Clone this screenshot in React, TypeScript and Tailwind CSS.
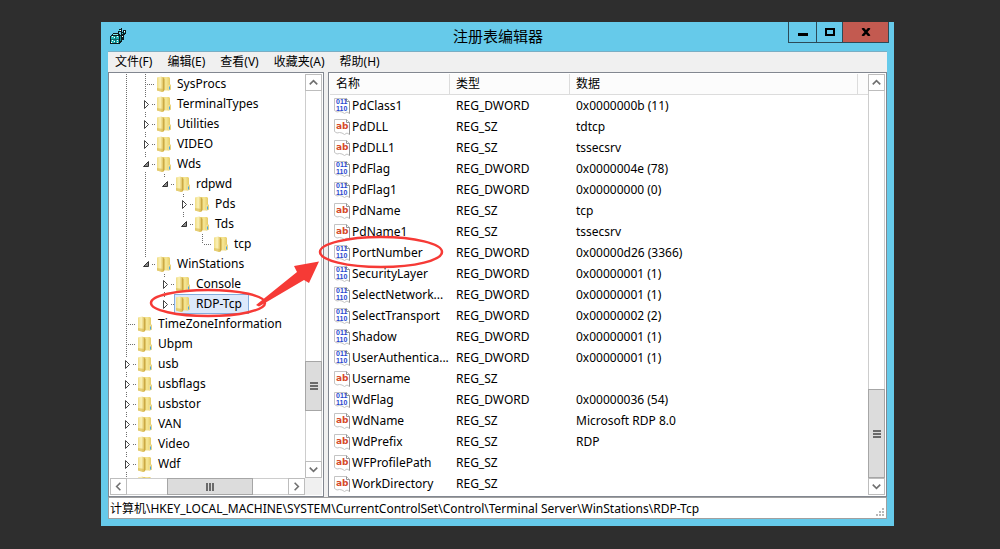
import { ReactNode } from "react"
import clsx from "clsx"

type Cell = "none" | "line" | "leaf" | "lastLeaf" | "closed" | "lastClosed" | "open" | "lastOpen"

interface TreeRow {
  name: string
  cells: Cell[]
  selected?: boolean
}

interface RegValue {
  name: string
  type: "REG_DWORD" | "REG_SZ"
  data: string
}

const menus = ["文件(F)", "编辑(E)", "查看(V)", "收藏夹(A)", "帮助(H)"]

const treeRows: TreeRow[] = [
  { name: "SysProcs", cells: ["line", "leaf"] },
  { name: "TerminalTypes", cells: ["line", "closed"] },
  { name: "Utilities", cells: ["line", "closed"] },
  { name: "VIDEO", cells: ["line", "closed"] },
  { name: "Wds", cells: ["line", "open"] },
  { name: "rdpwd", cells: ["line", "line", "lastOpen"] },
  { name: "Pds", cells: ["line", "line", "none", "closed"] },
  { name: "Tds", cells: ["line", "line", "none", "lastOpen"] },
  { name: "tcp", cells: ["line", "line", "none", "none", "lastLeaf"] },
  { name: "WinStations", cells: ["line", "lastOpen"] },
  { name: "Console", cells: ["line", "none", "closed"] },
  { name: "RDP-Tcp", cells: ["line", "none", "lastClosed"], selected: true },
  { name: "TimeZoneInformation", cells: ["leaf"] },
  { name: "Ubpm", cells: ["leaf"] },
  { name: "usb", cells: ["closed"] },
  { name: "usbflags", cells: ["closed"] },
  { name: "usbstor", cells: ["closed"] },
  { name: "VAN", cells: ["closed"] },
  { name: "Video", cells: ["closed"] },
  { name: "Wdf", cells: ["closed"] },
  { name: "", cells: ["closed"] },
]

const values: RegValue[] = [
  { name: "PdClass1", type: "REG_DWORD", data: "0x0000000b (11)" },
  { name: "PdDLL", type: "REG_SZ", data: "tdtcp" },
  { name: "PdDLL1", type: "REG_SZ", data: "tssecsrv" },
  { name: "PdFlag", type: "REG_DWORD", data: "0x0000004e (78)" },
  { name: "PdFlag1", type: "REG_DWORD", data: "0x00000000 (0)" },
  { name: "PdName", type: "REG_SZ", data: "tcp" },
  { name: "PdName1", type: "REG_SZ", data: "tssecsrv" },
  { name: "PortNumber", type: "REG_DWORD", data: "0x00000d26 (3366)" },
  { name: "SecurityLayer", type: "REG_DWORD", data: "0x00000001 (1)" },
  { name: "SelectNetwork...", type: "REG_DWORD", data: "0x00000001 (1)" },
  { name: "SelectTransport", type: "REG_DWORD", data: "0x00000002 (2)" },
  { name: "Shadow", type: "REG_DWORD", data: "0x00000001 (1)" },
  { name: "UserAuthentica...", type: "REG_DWORD", data: "0x00000001 (1)" },
  { name: "Username", type: "REG_SZ", data: "" },
  { name: "WdFlag", type: "REG_DWORD", data: "0x00000036 (54)" },
  { name: "WdName", type: "REG_SZ", data: "Microsoft RDP 8.0" },
  { name: "WdPrefix", type: "REG_SZ", data: "RDP" },
  { name: "WFProfilePath", type: "REG_SZ", data: "" },
  { name: "WorkDirectory", type: "REG_SZ", data: "" },
]

function AppIcon() {
  return (
    <svg width="17" height="17" viewBox="0 0 17 17" shapeRendering="crispEdges">
      <path d="M0 8H1V7H2V6H3V5H9V6H10V7H12V14H11V15H10V16H0Z" fill="#0a1a1c" />
      <path d="M1 8H9V15H1Z" fill="#22b4b4" />
      <path d="M3 6H8V7H3Z" fill="#7fe9e9" />
      <path d="M10 8h1v5h-1z" fill="#158888" />
      <path d="M1 11h8v1H1zM5 8h1v7H5z" fill="#0f6a6c" />
      <path d="M2 8h1v1H2zM4 9h1v1H4zM7 8h1v1H7zM2 12h1v1H2zM4 13h1v1H4zM7 12h1v1H7zM1 14h1v1H1zM7 14h1v1H7z" fill="#fff" />
      <path d="M9 1h3v3H9zM13 2h3v4h-3zM11 4h3v3h-3zM11 0h1v1h-1zM14 6h1v1h-1zM8 3h1v2H8zM12 7h2v5h-2z" fill="#0a1a1c" />
      <path d="M9 2h2v1H9zM14 3h1v2h-1zM12 5h1v1h-1z" fill="#3fd4d4" />
      <path d="M10 2h1v1h-1zM14 3h1v1h-1zM12 8h1v1h-1z" fill="#fff" />
    </svg>
  )
}

function FolderIcon() {
  return (
    <svg width="14" height="16" viewBox="0 0 14 16" className="shrink-0">
      <defs>
        <linearGradient id="folderBack" x1="0" x2="1">
          <stop offset="0" stopColor="#e3c866" />
          <stop offset="0.5" stopColor="#f6e795" />
          <stop offset="1" stopColor="#e2c45c" />
        </linearGradient>
        <linearGradient id="folderFront" x1="0" x2="1">
          <stop offset="0" stopColor="#f0dc84" />
          <stop offset="0.5" stopColor="#fbf2b8" />
          <stop offset="1" stopColor="#dcbc54" />
        </linearGradient>
      </defs>
      <path d="M4 1H12L13 2V8.500L14 9V13.500L12 14.500H5Z" fill="url(#folderBack)" />
      <path d="M0 1.500L4 0.500L6.500 1.500V15.500L5 16L0 14.500Z" fill="url(#folderFront)" />
      <path d="M0 12L6.500 13V15.500L5 16L0 14.500Z" fill="#d9b94f" opacity="0.6" />
      <path d="M6 1.500L7.500 3V14L6 15.500Z" fill="#cba944" />
      <path d="M11 9L13.500 8.500V13.500L11 14.500Z" fill="#f0de94" />
      <path d="M12 10.500H13V13.500H12Z" fill="#4aa8de" />
    </svg>
  )
}

function TreeCell({ kind }: { kind: Cell }) {
  const arrow = /closed|open/i.test(kind)
  const leaf = /leaf/i.test(kind)
  const last = kind.startsWith("last")
  return (
    <svg width="19" height="20" viewBox="0 0 19 20" className="shrink-0">
      <g stroke="#6d6d6d" strokeDasharray="1 1">
        {(kind === "line" || kind === "leaf") && <path d="M9.500 0V20" />}
        {kind === "lastLeaf" && <path d="M9.500 0V10" />}
        {leaf && <path d="M11 10.500H19" />}
        {arrow && <path d="M9.500 0V3M16 10.500H19" />}
        {arrow && !last && <path d="M9.500 18V20" />}
      </g>
      {/closed/i.test(kind) && <path d="M8.500 6.500V14.500L12.500 10.500Z" fill="#fff" stroke="#444" />}
      {/open/i.test(kind) && <path d="M12.500 7.500V12.500H7.500Z" fill="#8a8a8a" stroke="#333" />}
    </svg>
  )
}

function ValueIcon({ type }: { type: RegValue["type"] }) {
  return (
    <svg width="16" height="16" viewBox="0 0 16 16" className="shrink-0">
      <path
        d="M0.500 0.500H12.500L15.500 3.500V15.500L13 14L10.500 15.500L8 14L5.500 13.500L3 14L0.500 12.500Z"
        fill="#fff"
        stroke="#c4c4c4"
      />
      <path d="M12.500 0.500V3.500H15.500V15.500" fill="none" stroke="#969696" />
      {type === "REG_SZ" ? (
        <text x="2" y="10" fontFamily="DejaVu Sans" fontSize="9" fontWeight="700" fill="#d6492a">
          ab
        </text>
      ) : (
        <g fontFamily="Liberation Sans" fontSize="7" fontWeight="700" fill="#2747cf">
          <text x="2" y="6">
            011
          </text>
          <text x="2" y="13">
            110
          </text>
        </g>
      )}
    </svg>
  )
}

const chevrons = {
  up: "M4 10L8 6L12 10",
  down: "M4 6L8 10L12 6",
  left: "M10 4L6 8L10 12",
  right: "M6 4L10 8L6 12",
}

function ScrollButton({ dir }: { dir: keyof typeof chevrons }) {
  return (
    <button
      type="button"
      aria-label={dir}
      className="flex size-[17px] shrink-0 items-center justify-center border border-[#bdbdbd] bg-white"
    >
      <svg width="15" height="15" viewBox="0 0 16 16" fill="none" stroke="#707070" strokeWidth="1.700" className="shrink-0">
        <path d={chevrons[dir]} />
      </svg>
    </button>
  )
}

function Thumb({ className, vertical }: { className: string; vertical?: boolean }) {
  return (
    <div className={clsx("flex shrink-0 items-center justify-center border border-[#a6a6a6] bg-[#dcdcdc]", className)}>
      <svg width="8" height="8" viewBox="0 0 8 8" stroke="#6a6a6a" strokeWidth="2" shapeRendering="crispEdges">
        <path d={vertical ? "M0 1H8M0 4H8M0 7H8" : "M1 0V8M4 0V8M7 0V8"} />
      </svg>
    </div>
  )
}

function Header({ children }: { children: ReactNode }) {
  return (
    <th className="h-[21px] border-r border-b border-[#dcdcdc] bg-[#fcfcfc] pl-1.5 text-left font-normal">
      {children}
    </th>
  )
}

function TitleBar() {
  return (
    <header className="flex h-[29px] items-start">
      <div className="flex w-[100px] shrink-0 pt-1.5 pl-0.5">
        <AppIcon />
      </div>
      <h1 className="flex-1 pt-0.5 text-center text-[15px] leading-6">注册表编辑器</h1>
      <div className="flex h-[21px] w-[101px] shrink-0 border border-t-0 border-[#2c4a57]">
        <button type="button" aria-label="最小化" className="flex w-7 items-center justify-center border-r border-[#2c4a57]">
          <span className="mt-1 h-[3px] w-2.5 bg-black" />
        </button>
        <button type="button" aria-label="最大化" className="flex w-[26px] items-center justify-center border-r border-[#2c4a57]">
          <span className="h-2 w-2.5 border-2 border-black" />
        </button>
        <button type="button" aria-label="关闭" className="flex flex-1 items-center justify-center bg-[#c35a50]">
          <svg width="10" height="8" viewBox="0 0 10 8" stroke="#000" strokeWidth="2.500">
            <path d="M1.500 0L8.500 8M8.500 0L1.500 8" />
          </svg>
        </button>
      </div>
    </header>
  )
}

function TreePanel() {
  return (
    <div className="flex w-[216px] shrink-0 flex-col border border-[#828790] bg-white p-px">
      <div className="flex h-[404px]">
        <ul className="flex-1 overflow-hidden pl-[7px]">
          {treeRows.map((row, i) => (
            <li key={i} className="flex h-5 items-center">
              {row.cells.map((cell, j) => (
                <TreeCell key={j} kind={cell} />
              ))}
              <div
                className={clsx(
                  "flex h-5 items-center gap-1.5 border pr-1.5 pl-px",
                  row.selected ? "border-[#84acdd] bg-[#dce9fb]" : "border-transparent",
                )}
              >
                <FolderIcon />
                <span className="whitespace-nowrap">{row.name}</span>
              </div>
            </li>
          ))}
        </ul>
        <div className="flex w-[17px] flex-col border-x border-[#cdcdcd]">
          <div className="-mx-px flex flex-1 flex-col">
            <ScrollButton dir="up" />
            <div className="flex-1" />
            <Thumb className="h-[50px]" vertical />
            <div className="h-[50px]" />
            <ScrollButton dir="down" />
          </div>
        </div>
      </div>
      <div className="flex h-[17px] bg-[#f0f0f0]">
        <div className="flex flex-1 border-y border-[#cdcdcd] bg-white">
          <div className="-my-px flex flex-1">
            <ScrollButton dir="left" />
            <div className="w-10" />
            <Thumb className="w-[86px]" />
            <div className="flex-1" />
            <ScrollButton dir="right" />
          </div>
        </div>
        <div className="w-[17px]" />
      </div>
    </div>
  )
}

function ValuePanel() {
  return (
    <div className="flex min-w-0 flex-1 border border-[#828790] bg-white p-px">
      <div className="min-w-0 flex-1">
        <table className="w-full table-fixed border-separate border-spacing-0">
          <colgroup>
            <col className="w-[120px]" />
            <col className="w-[120px]" />
            <col />
            <col className="w-[10px]" />
          </colgroup>
          <thead>
            <tr>
              <Header>名称</Header>
              <Header>类型</Header>
              <Header>数据</Header>
              <td className="border-b border-[#dcdcdc] bg-[#fcfcfc]" />
            </tr>
          </thead>
          <tbody>
            {values.map((v) => (
              <tr key={v.name} className="h-[21px]">
                <td className="p-0 pl-1">
                  <div className="flex h-[21px] items-center gap-0.5 whitespace-nowrap">
                    <ValueIcon type={v.type} />
                    {v.name}
                  </div>
                </td>
                <td className="p-0 pl-1.5">{v.type}</td>
                <td className="p-0 pl-1.5">{v.data}</td>
                <td />
              </tr>
            ))}
          </tbody>
        </table>
      </div>
      <div className="flex w-[17px] shrink-0 flex-col border-x border-[#cdcdcd]">
        <div className="-mx-px flex flex-1 flex-col">
          <ScrollButton dir="up" />
          <div className="flex-1" />
          <Thumb className="h-[89px]" vertical />
          <ScrollButton dir="down" />
        </div>
      </div>
    </div>
  )
}

// red marks pointing from the RDP-Tcp key to its PortNumber value
function Annotations() {
  return (
    <svg width="345" height="260" viewBox="0 0 345 260" fill="none" className="pointer-events-none absolute top-0 left-0">
      <ellipse cx="100" cy="231" rx="57" ry="13" stroke="#f63a36" strokeWidth="2.500" />
      <ellipse cx="273" cy="180" rx="61" ry="15" stroke="#f63a36" strokeWidth="2.500" />
      <path d="M148 233L189 200L186 194L211 189.500L201 211L196 208L151 234.500Z" fill="#f63a36" />
    </svg>
  )
}

export default function App() {
  return (
    <div className="min-h-screen bg-[#2e2e2e] pt-[22px] pr-[106px] pb-[23px] pl-[101px] font-['Noto_Sans','Noto_Sans_CJK_SC',sans-serif] text-[12px] leading-4 text-black">
      <main className="bg-[#66caea] px-[7px] pb-[7px]">
        <div className="-mr-0.5">
          <TitleBar />
        </div>
        <div className="border-t border-[#7aaec4] bg-[#f0f0f0]">
          <nav className="flex h-5 items-center gap-[15px] pl-[7px]">
            {menus.map((m) => (
              <button key={m} type="button">
                {m}
              </button>
            ))}
          </nav>
          <div className="relative flex gap-1">
            <TreePanel />
            <ValuePanel />
            <Annotations />
          </div>
          <footer className="flex h-[22px] items-center justify-between border border-[#a0a0a0] bg-white pt-px pl-px">
            <span>计算机\HKEY_LOCAL_MACHINE\SYSTEM\CurrentControlSet\Control\Terminal Server\WinStations\RDP-Tcp</span>
            <svg width="10" height="10" viewBox="0 0 10 10" fill="#b8b8b8" className="self-end" shapeRendering="crispEdges">
              <path d="M6 0h2v2H6zM3 3h2v2H3zM6 3h2v2H6zM0 6h2v2H0zM3 6h2v2H3zM6 6h2v2H6z" />
            </svg>
          </footer>
        </div>
      </main>
    </div>
  )
}
